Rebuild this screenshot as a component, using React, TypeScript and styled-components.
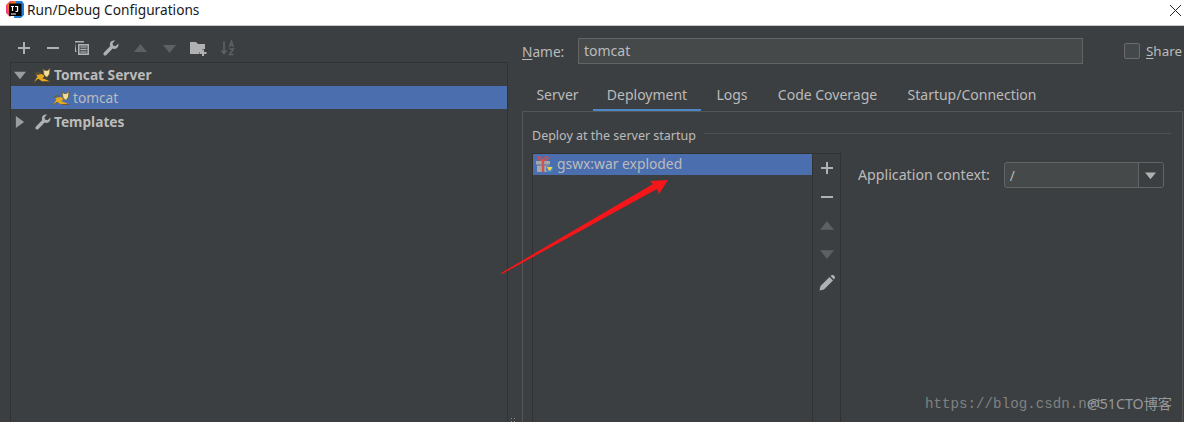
import React from "react";
import styled, { createGlobalStyle } from "styled-components";

const Global = createGlobalStyle`
  html, body { margin: 0; padding: 0; background: #3c3f41; }
  #root { width: 1184px; height: 422px; overflow: hidden; }
  * { box-sizing: border-box; }
`;

const Window = styled.div`
  position: relative;
  width: 1184px;
  height: 422px;
  overflow: hidden;
  display: flex;
  flex-direction: column;
  background: #3c3f41;
  color: #bbbbbb;
  font-family: "Noto Sans", "Noto Sans CJK SC", "Liberation Sans", sans-serif;
  font-size: 13.7px;
`;

const TitleBar = styled.header`
  height: 26px;
  flex: none;
  background: #ffffff;
  border-bottom: 1px solid #c8c8c8;
  display: flex;
  align-items: center;
  padding: 0 2px 5px 6px;
  gap: 3px;
  color: #1a1a1a;
`;

const TitleText = styled.span`
  flex: 1;
  font-size: 13.7px;
  line-height: 18px;
`;

const Body = styled.div`
  flex: 1;
  display: flex;
  min-height: 0;
`;

const Sidebar = styled.aside`
  width: 522px;
  flex: none;
  padding-left: 10px;
  display: flex;
  flex-direction: column;
`;

const Toolbar = styled.div`
  height: 36px;
  flex: none;
  display: flex;
  align-items: center;
  margin-left: -1px;
  padding: 8px 0 0 0;
`;

const ToolSlot = styled.span`
  width: 29.2px;
  height: 18px;
  display: flex;
  align-items: center;
  justify-content: center;
`;

const Tree = styled.div`
  width: 498px;
  flex: 1;
  border-top: 1px solid #323232;
  border-right: 1px solid #323232;
  border-left: 1px solid #323232;
  background: #3c3f41;
`;

const Row = styled.div<{ $selected?: boolean; $indent: number; $bold?: boolean }>`
  height: 23px;
  display: flex;
  align-items: center;
  padding-left: ${(p) => p.$indent}px;
  background: ${(p) => (p.$selected ? "#4b6eaf" : "transparent")};
  font-weight: ${(p) => (p.$bold ? 700 : 400)};
  font-size: 13.7px;
  gap: 3px;
  white-space: nowrap;
  &:last-child { margin-top: 1px; }
`;

const Disclosure = styled.span`
  width: 21px;
  display: flex;
  justify-content: center;
  padding-right: 4px;
`;

const CatSlot = styled.span`
  display: flex;
  margin-left: -2px;
`;

const Grip = styled.span`
  position: absolute;
  left: 510px;
  bottom: 0;
  width: 6px;
  height: 5px;
  background-image: radial-gradient(circle, #8a8a8a 0.8px, transparent 1px);
  background-size: 3px 3px;
`;

const Main = styled.main`
  flex: 1;
  display: flex;
  flex-direction: column;
  min-width: 0;
  padding: 12px 1px 0 0;
`;

const NameRow = styled.div`
  height: 26px;
  flex: none;
  display: flex;
  align-items: center;
`;

const NameLabel = styled.label`
  width: 56px;
  flex: none;
  font-size: 13.7px;
  u { text-decoration-thickness: 1px; text-underline-offset: 2px; }
`;

const Input = styled.div`
  width: 505px;
  height: 26px;
  flex: none;
  background: #45494a;
  border: 1px solid #646464;
  padding-left: 5px;
  display: flex;
  align-items: center;
  font-size: 14px;
  line-height: 1;
`;

const Check = styled.span`
  width: 16px;
  height: 16px;
  flex: none;
  margin-left: 41px;
  border: 1px solid #6b6b6b;
  border-radius: 2px;
  background: #43494a;
`;

const ShareLabel = styled.label`
  margin-left: 6px;
  font-size: 13.4px;
  white-space: nowrap;
  u { text-decoration-thickness: 1px; text-underline-offset: 2px; }
`;

const Tabs = styled.nav`
  height: 29px;
  margin-top: 18px;
  flex: none;
  display: flex;
  align-items: stretch;
`;

const Tab = styled.div<{ $active?: boolean; $w: number }>`
  width: ${(p) => p.$w}px;
  flex: none;
  display: flex;
  align-items: center;
  justify-content: center;
  padding-bottom: 3px;
  font-size: 14px;
  white-space: nowrap;
  border-bottom: 2px solid ${(p) => (p.$active ? "#4a88c7" : "transparent")};
`;

const Panel = styled.section`
  flex: 1;
  border: 1px solid #555555;
  border-bottom: 0;
  padding: 13px 11px 0 9px;
  display: flex;
  flex-direction: column;
  min-height: 0;
`;

const GroupHeader = styled.div`
  height: 20px;
  flex: none;
  display: flex;
  align-items: center;
  gap: 8px;
  font-size: 12.5px;
  white-space: nowrap;
  &::after {
    content: "";
    flex: 1;
    height: 1px;
    margin-top: -4px;
    background: #4f5254;
  }
`;

const DeployArea = styled.div`
  flex: 1;
  display: flex;
  margin-top: 8px;
  min-height: 0;
`;

const ListBox = styled.div`
  width: 309px;
  flex: none;
  border: 1px solid #323232;
  border-bottom: 0;
  display: flex;
`;

const List = styled.div`
  flex: 1;
`;

const ListRow = styled.div`
  height: 21px;
  background: #4b6eaf;
  display: flex;
  align-items: center;
  padding: 0 0 2px 2px;
  gap: 3px;
  font-size: 13.85px;
  white-space: nowrap;
`;

const SideTools = styled.div`
  width: 28px;
  flex: none;
  border-left: 1px solid #323232;
  display: flex;
  flex-direction: column;
  align-items: center;
  padding-top: 5px;
  gap: 10.8px;
`;

const SideSlot = styled.span`
  height: 18px;
  display: flex;
  align-items: center;
  justify-content: center;
`;

const Context = styled.div`
  display: flex;
  align-items: center;
  align-self: flex-start;
  height: 26px;
  margin: 9px 0 0 17px;
  gap: 14px;
`;

const ContextLabel = styled.span`
  font-size: 14.2px;
  padding-bottom: 2px;
  white-space: nowrap;
`;

const Combo = styled.div`
  width: 160px;
  height: 26px;
  display: flex;
  border: 1px solid #646464;
  border-radius: 3px;
  background: #45494a;
`;

const ComboValue = styled.span`
  flex: 1;
  padding-left: 5px;
  display: flex;
  align-items: center;
`;

const ComboArrow = styled.span`
  width: 25px;
  flex: none;
  border-left: 1px solid #646464;
  background: #3c3f41;
  border-radius: 0 2px 2px 0;
  display: flex;
  align-items: center;
  justify-content: center;
`;

const Watermark = styled.div`
  position: absolute;
  left: 925px;
  top: 394px;
  font-family: "Liberation Mono", "DejaVu Sans Mono", monospace;
  font-size: 14.2px;
  line-height: 20px;
  color: #7f8283;
  white-space: nowrap;
`;

const WatermarkTag = styled.div`
  position: absolute;
  left: 1087px;
  top: 395px;
  font-family: "Noto Sans", "Noto Sans CJK SC", sans-serif;
  font-size: 14.2px;
  line-height: 18px;
  color: #96989a;
  white-space: nowrap;
`;

const ArrowLayer = styled.svg`
  position: absolute;
  left: 495px;
  top: 170px;
  pointer-events: none;
`;

const Plus = ({ c = "#afb1b3" }: { c?: string }) => (
  <svg width="14" height="14" viewBox="0 0 14 14"><path d="M6 1h2v5h5v2H8v5H6V8H1V6h5z" fill={c} /></svg>
);
const Minus = () => (
  <svg width="14" height="14" viewBox="0 0 14 14"><path d="M1 6h12v2H1z" fill="#afb1b3" /></svg>
);
const Copy = () => (
  <svg width="16" height="16" viewBox="0 0 16 16" fill="none">
    <path d="M1 2.500h9V1H1v11h1.500z" fill="#afb1b3" />
    <path d="M4 4h11v11H4z" fill="#afb1b3" />
    <path d="M5.500 5.500h8v8h-8z" fill="#55585a" />
    <path d="M6.500 7h6M6.500 9.500h6M6.500 12h6" stroke="#afb1b3" strokeWidth="1.1" />
  </svg>
);
const Wrench = () => (
  <svg width="16" height="16" viewBox="0 0 16 16">
    <path d="M15.300 3.600 12.600 6.200 10 5.600 9.500 3.200 12.200.6C10.200 0 8.200.8 7.300 2.500c-.6 1.200-.5 2.500 0 3.600L1 12.400c-.8.8-.8 1.800-.1 2.500s1.800.7 2.500 0L9.700 8.600c1.200.5 2.500.5 3.600-.1 1.700-.9 2.600-3 2-4.900z" fill="#afb1b3" />
  </svg>
);
const Triangle = ({ dir, c, size = 12 }: { dir: "up" | "down" | "left" | "right"; c: string; size?: number }) => {
  const pts = { up: "0,10 13,10 6.500,2", down: "0,3 13,3 6.500,11", right: "2,0 11,6.500 2,13", left: "11,0 2,6.500 11,13" }[dir];
  return <svg width={size} height={size} viewBox="0 0 13 13"><polygon points={pts} fill={c} /></svg>;
};
const FolderPlus = () => (
  <svg width="17" height="15" viewBox="0 0 17 15">
    <path d="M0 1h6l2 2h7v5h-3v3H9v2H0z" fill="#afb1b3" />
    <path d="M12 8.500h2v2.500h2.500v2H14v2h-2v-2H9.500v-2H12z" fill="#afb1b3" />
  </svg>
);
const SortAz = () => (
  <svg width="16" height="16" viewBox="0 0 16 16" fill="none">
    <path d="M4 1.500v12M1.500 10.500 4 13.500l2.500-3" stroke="#5e6163" strokeWidth="1.6" />
    <path d="M9.500 7 11.500 1l2 6M10.200 5h2.600M9.500 9h4l-4 5.500h4" stroke="#5e6163" strokeWidth="1.4" />
  </svg>
);
const Tomcat = () => (
  <svg width="18" height="16" viewBox="0 0 18 16" fill="none">
    <path d="M1 15 4.500 9.500 3 8l6-1 2.500 2L9 12l-4 0z" fill="#e6a91f" />
    <path d="M2 7.500C3.500 5.500 6 5.500 8 6.500" stroke="#6e5a2a" strokeWidth="1.1" />
    <path d="M10 2 12 3.500h2.500L17 1.500 16.500 7 14 10.500 11 8z" fill="#f2df9b" stroke="#6e5a2a" strokeWidth=".8" />
    <path d="M8.500 11 13 12.500 17 14.500H9.500L6 12.500z" fill="#e6a91f" />
    <path d="M9.500 14.500h7.500M1 15.500l4-3.500" stroke="#6e5a2a" strokeWidth="1" />
  </svg>
);
const Gift = () => (
  <svg width="19" height="18" viewBox="0 0 19 18">
    <path d="M1 6h14v3.500H1zM2 10.500h12V17H2z" fill="#a4a6a8" />
    <path d="M6.800 6h2.400v11H6.800z" fill="#d0524e" />
    <path d="M8 5.500C6 1 2.500 .8 3 3.200S6 5.500 8 5.500c2 0 4.500 0 5-2.300S10 1 8 5.500z" stroke="#d0524e" strokeWidth="1.3" fill="none" />
    <circle cx="14.500" cy="14" r="3.500" fill="#3f87c9" />
    <path d="M12 12h5.500l-2 3.500h-1.800z" fill="#f5cf45" />
  </svg>
);
const Pencil = () => (
  <svg width="16" height="16" viewBox="0 0 16 16">
    <path d="M.5 15.500 1.500 11 10.500 2 14 5.500 5 14.500z" fill="#afb1b3" />
    <path d="M11.500 1 13 0c.6-.3 1-.2 1.500.2l1.300 1.300c.4.5.4 1 .1 1.500L15 4.500z" fill="#afb1b3" />
  </svg>
);
const Close = () => (
  <svg width="13" height="13" viewBox="0 0 13 13"><path d="M1 1l11 11M12 1 1 12" stroke="#222" strokeWidth="1" /></svg>
);
const Logo = () => (
  <svg width="18" height="18" viewBox="0 0 18 18">
    <path d="M0 4 4 0h6l-1 8-5 8-4-4z" fill="#f0457a" />
    <path d="M10 0h6l2 3v11l-3 3H8z" fill="#1f7fd6" />
    <path d="M1 3 9 0l2 4-7 11z" fill="#f97a12" />
    <rect x="3" y="2.500" width="12.500" height="12.500" fill="#000" />
    <path d="M5 5h3v1H7.100v4H5.900V6H5zM9 5h3.200v4.800c0 1-.8 1.300-2 1.300l-1-.5.5-.8c.6.3 1.200.3 1.200-.3V6H9z" fill="#fff" />
    <rect x="5" y="12.500" width="5" height="1" fill="#fff" />
  </svg>
);

export default function App() {
  return (
    <Window>
      <Global />
      <TitleBar>
        <Logo />
        <TitleText>Run/Debug Configurations</TitleText>
        <Close />
      </TitleBar>
      <Body>
        <Sidebar>
          <Toolbar>
            <ToolSlot><Plus /></ToolSlot>
            <ToolSlot><Minus /></ToolSlot>
            <ToolSlot><Copy /></ToolSlot>
            <ToolSlot><Wrench /></ToolSlot>
            <ToolSlot><Triangle dir="up" c="#5e6163" size={13} /></ToolSlot>
            <ToolSlot><Triangle dir="down" c="#5e6163" size={13} /></ToolSlot>
            <ToolSlot><FolderPlus /></ToolSlot>
            <ToolSlot><SortAz /></ToolSlot>
          </Toolbar>
          <Tree>
            <Row $indent={0} $bold>
              <Disclosure><Triangle dir="down" c="#9a9c9e" size={12} /></Disclosure>
              <CatSlot><Tomcat /></CatSlot><span>Tomcat Server</span>
            </Row>
            <Row $indent={43} $selected>
              <CatSlot><Tomcat /></CatSlot><span>tomcat</span>
            </Row>
            <Row $indent={0} $bold>
              <Disclosure><Triangle dir="right" c="#9a9c9e" size={12} /></Disclosure>
              <Wrench /><span>Templates</span>
            </Row>
          </Tree>
          <Grip />
        </Sidebar>
        <Main>
          <NameRow>
            <NameLabel><u>N</u>ame:</NameLabel>
            <Input>tomcat</Input>
            <Check />
            <ShareLabel><u>S</u>hare</ShareLabel>
          </NameRow>
          <Tabs>
            <Tab $w={71}>Server</Tab>
            <Tab $w={108} $active>Deployment</Tab>
            <Tab $w={62}>Logs</Tab>
            <Tab $w={129}>Code Coverage</Tab>
            <Tab $w={160}>Startup/Connection</Tab>
          </Tabs>
          <Panel>
            <GroupHeader>Deploy at the server startup</GroupHeader>
            <DeployArea>
              <ListBox>
                <List>
                  <ListRow><Gift /><span>gswx:war exploded</span></ListRow>
                </List>
                <SideTools>
                  <SideSlot><Plus /></SideSlot>
                  <SideSlot><Minus /></SideSlot>
                  <SideSlot><Triangle dir="up" c="#5e6163" size={14} /></SideSlot>
                  <SideSlot><Triangle dir="down" c="#5e6163" size={14} /></SideSlot>
                  <SideSlot><Pencil /></SideSlot>
                </SideTools>
              </ListBox>
              <Context>
                <ContextLabel>Application context:</ContextLabel>
                <Combo>
                  <ComboValue>/</ComboValue>
                  <ComboArrow><Triangle dir="down" c="#afb1b3" size={11} /></ComboArrow>
                </Combo>
              </Context>
            </DeployArea>
          </Panel>
        </Main>
      </Body>
      <ArrowLayer width="180" height="110" viewBox="0 0 180 110">
        <polygon points="6,103 158,14 155,11 173,10 164,24 162,19 7,104" fill="#f5161a" />
      </ArrowLayer>
      <Watermark>https://blog.csdn.net</Watermark>
      <WatermarkTag>@51CTO博客</WatermarkTag>
    </Window>
  );
}
